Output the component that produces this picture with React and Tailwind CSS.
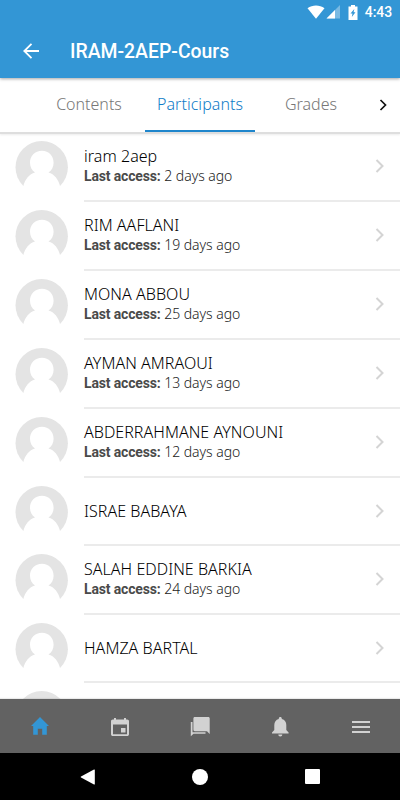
const participants = [
  { id: 1, name: 'iram 2aep', lastAccess: '2 days ago' },
  { id: 2, name: 'RIM AAFLANI', lastAccess: '19 days ago' },
  { id: 3, name: 'MONA ABBOU', lastAccess: '25 days ago' },
  { id: 4, name: 'AYMAN AMRAOUI', lastAccess: '13 days ago' },
  { id: 5, name: 'ABDERRAHMANE AYNOUNI', lastAccess: '12 days ago' },
  { id: 6, name: 'ISRAE BABAYA' },
  { id: 7, name: 'SALAH EDDINE BARKIA', lastAccess: '24 days ago' },
  { id: 8, name: 'HAMZA BARTAL' },
];

function Avatar() {
  return (
    <svg className="ml-[15px] h-[53px] w-[53px] shrink-0" viewBox="0 0 53 53">
      <circle cx="26.7" cy="26.3" r="26.2" fill="#e4e4e4" />
      <path
        fill="#fff"
        d="M27 9.800c-7.200 0-12 5-12 12 0 4.200 1.900 7.700 5 9.600-5.800 1.600-9.800 6.500-11.800 14V53h37v-7.600c-2-7.500-5.900-12.400-11.700-14 3.200-1.900 5.100-5.400 5.100-9.600 0-7-4.600-12-11.600-12z"
      />
    </svg>
  );
}

function ParticipantRow({ name, lastAccess }) {
  return (
    <li className={`flex items-center ${lastAccess ? 'h-[69px]' : 'h-[68px]'}`}>
      <Avatar />
      <div className="ml-4 flex h-full flex-1 items-center justify-between border-b-2 border-[#ebebeb] pr-[15px]">
        <div className={`whitespace-nowrap ${lastAccess ? 'pb-0.5' : ''}`}>
          <h2 className="text-[16px] font-light leading-5 tracking-[0.04px] text-black">{name}</h2>
          {lastAccess && (
            <p className="text-[14px] font-light leading-5 tracking-[-0.04px] text-[#222]">
              <strong className="font-['Roboto',sans-serif] font-bold tracking-[-0.15px] text-[#4a4a4a]">Last access:</strong> {lastAccess}
            </p>
          )}
        </div>
        <svg className="mb-px h-3.5 w-2.5" viewBox="0 0 10 14" fill="none" stroke="#d4d4d4" strokeWidth="2">
          <path d="M1.500 1l6 6-6 6" />
        </svg>
      </div>
    </li>
  );
}

function StatusBar() {
  return (
    <div className="flex h-6 items-center justify-end pr-2 text-white">
      <svg className="h-[14px] w-[18px]" viewBox="0 0 18 14" fill="currentColor">
        <path d="M9 13.800L.5 3.200C5.500-.5 12.500-.5 17.500 3.200z" />
      </svg>
      <svg className="ml-px h-[14px] w-[15px]" viewBox="0 0 15 14" fill="currentColor">
        <path d="M14 0v13.500H.5z" opacity=".35" />
        <path d="M9 5v8.500H.5z" />
      </svg>
      <svg className="ml-[7px] h-[15px] w-[10px]" viewBox="0 0 10 15">
        <path fill="currentColor" d="M3 0h4v1.500h2.500V15H.5V1.500H3z" />
        <path fill="#3396d5" d="M6.300 4L2.500 8.500h2L3.800 12l3.700-4.700H5.600z" />
      </svg>
      <span className="ml-[7px] font-['Roboto',sans-serif] text-[14px] font-medium leading-none tracking-[-0.1px]">4:43</span>
    </div>
  );
}

function TabBar() {
  return (
    <nav className="relative z-10 flex h-14 shrink-0 border-b-2 border-[#dedede] bg-white text-[16px] font-light text-[#777] shadow-[0_1px_2px_rgba(0,0,0,0.08)]">
      <a className="ml-[33px] flex w-[112px] items-center justify-center pb-0.5">Contents</a>
      <a className="flex w-[110px] items-center justify-center border-b-2 border-[#1f86cc] tracking-[0.06px] text-[#0f7cc8]">Participants</a>
      <a className="flex w-[112px] items-center justify-center pb-0.5">Grades</a>
      <svg className="ml-3 mt-[21px] h-3 w-2" viewBox="0 0 8 12" fill="none" stroke="#111" strokeWidth="1.7">
        <path d="M1.500 1l5 5-5 5" />
      </svg>
    </nav>
  );
}

function BottomTabs() {
  return (
    <nav className="z-10 grid h-[54px] shrink-0 grid-cols-5 items-center justify-items-center bg-[#626262] text-[#d2d2d2] shadow-[0_-1px_1px_rgba(0,0,0,0.08)]">
      <svg className="h-[18px] w-[18px] text-[#3396d5]" viewBox="0 0 18 18" fill="currentColor">
        <path d="M9 0l9 9h-2.200v8.700h-4.600v-6H6.800v6H2.200V9H0z" />
      </svg>
      <svg className="mt-0.5 h-[18px] w-[18px]" viewBox="0 0 18 18" fill="currentColor">
        <path fillRule="evenodd" d="M3 0h2v1.500h8V0h2v1.500h1.200c1 0 1.800.8 1.800 1.800v12.900c0 1-.8 1.800-1.800 1.800H1.800C.8 18 0 17.200 0 16.200V3.300c0-1 .8-1.800 1.800-1.800H3zM2 6.500v9.700h14V6.500z" />
        <path d="M10 10h4.500v4.500H10z" />
      </svg>
      <svg className="mt-0.5 h-[20px] w-[20px]" viewBox="0 0 20 20" fill="currentColor">
        <path d="M4.800 0h13.500c.8 0 1.400.6 1.400 1.400V17l-2.700-2.800H4.800c-.8 0-1.400-.6-1.400-1.400V1.400C3.400.6 4 0 4.800 0z" />
        <path d="M.8 5h1.700v10.300h13v1.500H3.500L.8 19.300z" />
      </svg>
      <svg className="mt-0.5 h-5 w-[18px]" viewBox="0 0 18 20" fill="currentColor">
        <path d="M9.300 0c.9 0 1.500.6 1.500 1.500v.6c3 .7 4.500 3 4.500 6v5l2.300 2.400v1H1v-1l2.300-2.400v-5c0-3 1.500-5.300 4.500-6v-.6C7.800.6 8.400 0 9.300 0zM7.300 17.500h4c0 1.300-.8 2-2 2s-2-.7-2-2z" />
      </svg>
      <svg className="ml-px mt-0.5 h-3 w-[18px]" viewBox="0 0 18 12" fill="currentColor">
        <path d="M0 0h18v2H0zM0 5h18v2H0zM0 10h18v2H0z" />
      </svg>
    </nav>
  );
}

function AndroidNav() {
  return (
    <div className="flex h-[47px] shrink-0 items-center justify-between bg-black px-[80px]">
      <svg className="h-4 w-[15px]" viewBox="0 0 15 16" fill="#fff">
        <path d="M14 .5q.8-.3.800.600v13.800q0 .9-.8.600L1 8.500q-.7-.5 0-1z" />
      </svg>
      <span className="h-4 w-4 rounded-full bg-white" />
      <span className="h-[15px] w-[15px] rounded-[1px] bg-white" />
    </div>
  );
}

export default function App() {
  return (
    <div className="flex h-[800px] w-[400px] flex-col overflow-hidden bg-white font-['Noto_Sans',sans-serif]">
      <header className="relative z-20 h-[78px] shrink-0 bg-[#3396d5] text-white shadow-[0_1px_3px_rgba(0,0,0,0.35)]">
        <StatusBar />
        <div className="flex h-[54px] items-center pl-[23px]">
          <svg className="h-4 w-4" viewBox="0 0 16 16" fill="none" stroke="currentColor" strokeWidth="1.8">
            <path d="M16 8H1.500M8.500.800L1.300 8l7.200 7.200" />
          </svg>
          <h1 className="ml-[31px] mt-0.5 font-['Roboto',sans-serif] text-[19.4px] font-medium leading-6">IRAM-2AEP-Cours</h1>
        </div>
      </header>
      <TabBar />
      <main className="-mt-px min-h-0 flex-1 overflow-hidden">
        <ul>
          {participants.map((p) => (
            <ParticipantRow key={p.id} name={p.name} lastAccess={p.lastAccess} />
          ))}
          <li className="flex h-[68px] items-center">
            <Avatar />
          </li>
        </ul>
      </main>
      <BottomTabs />
      <AndroidNav />
    </div>
  );
}
